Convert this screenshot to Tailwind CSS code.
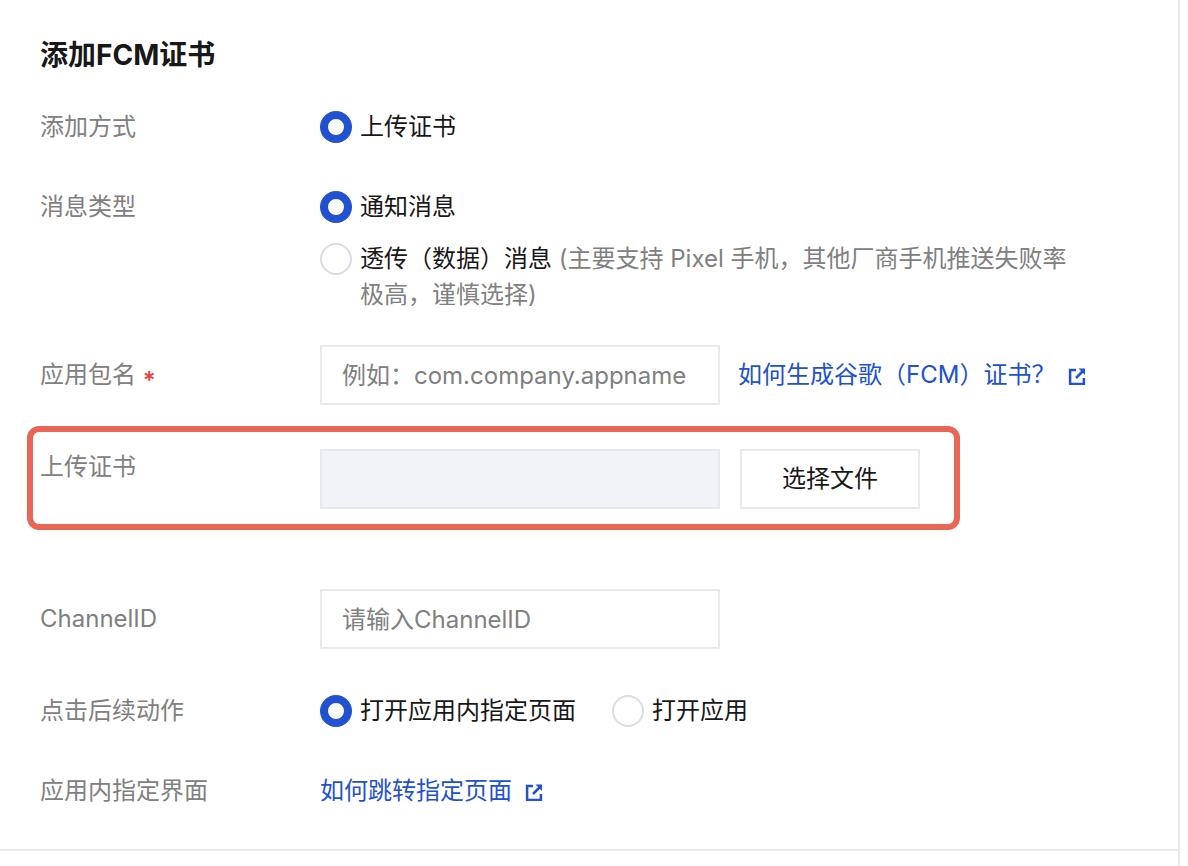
<!DOCTYPE html>
<html lang="zh-CN">
<head>
  <meta charset="UTF-8" />
  <meta name="viewport" content="width=device-width, initial-scale=1.0" />
  <title>添加FCM证书</title>
  <script src="https://cdn.jsdelivr.net/npm/@tailwindcss/browser@4"></script>
</head>
<body class="bg-white font-['Inter','Noto_Sans_CJK_SC',sans-serif] text-2xl/9 text-[#181818]">

  <main class="mr-2 min-h-screen border-r-2 border-[#e8e8ef]">
    <form class="border-b-2 border-[#e8e8ef] pt-[37px] pr-22 pb-10 pl-10">
      <h1 class="text-[28px]/9 font-bold">添加FCM证书</h1>

      <!-- 添加方式 -->
      <fieldset aria-labelledby="method-label" class="mt-9 grid grid-cols-[280px_1fr]">
        <span id="method-label" class="text-[#808080]">添加方式</span>
        <label class="flex items-center gap-2">
          <input type="radio" name="method" checked class="size-8 shrink-0 appearance-none rounded-full border-2 border-[#dadde5] checked:border-8 checked:border-[#2151d1]" />
          上传证书
        </label>
      </fieldset>

      <!-- 消息类型 -->
      <fieldset aria-labelledby="type-label" class="mt-11 grid grid-cols-[280px_1fr]">
        <span id="type-label" class="text-[#808080]">消息类型</span>
        <div class="flex flex-col gap-4">
          <label class="flex items-center gap-2">
            <input type="radio" name="type" checked class="size-8 shrink-0 appearance-none rounded-full border-2 border-[#dadde5] checked:border-8 checked:border-[#2151d1]" />
            通知消息
          </label>
          <label class="flex items-start gap-2">
            <input type="radio" name="type" class="mt-0.5 size-8 shrink-0 appearance-none rounded-full border-2 border-[#dadde5] checked:border-8 checked:border-[#2151d1]" />
            <span>透传（数据）消息 <span class="text-[#808080]">(主要支持 Pixel 手机，其他厂商手机推送失败率极高，谨慎选择)</span></span>
          </label>
        </div>
      </fieldset>

      <!-- 应用包名 -->
      <div class="mt-8 grid grid-cols-[280px_1fr] items-center">
        <label for="package" class="text-[#808080]">应用包名 <span class="align-sub leading-none font-semibold text-[#e54545]">*</span></label>
        <div class="flex items-center gap-[18px]">
          <input id="package" type="text" placeholder="例如：com.company.appname" class="h-15 w-100 border-2 border-[#e8e8ef] px-5 placeholder:text-[#808080]" />
          <a href="#" class="flex items-center gap-3 whitespace-nowrap text-[#2151d1]">
            如何生成谷歌（FCM）证书？
            <svg class="size-5 shrink-0" viewBox="0 0 20 20" fill="none" stroke="currentColor" stroke-width="2.5" aria-hidden="true">
              <path d="M9 5.1H3.1V18.9H16.9V13" />
              <path d="M9 13L16 6" />
              <path d="M11.5 3.5H18V10Z" fill="currentColor" stroke="none" />
            </svg>
          </a>
        </div>
      </div>

      <!-- 上传证书 -->
      <div class="relative mt-11 grid grid-cols-[280px_1fr]">
        <div class="pointer-events-none absolute -top-[23px] -bottom-[21px] -left-[13px] w-[933px] rounded-xl border-6 border-[#e96656]"></div>
        <label for="cert" class="text-[#808080]">上传证书</label>
        <div class="flex gap-5">
          <input id="cert" type="text" disabled class="h-15 w-100 border-2 border-[#e8e8ef] bg-[#f2f3f8] px-5" />
          <button type="button" class="h-15 w-45 border-2 border-[#e8e8ef] bg-white shadow-[0_4px_0_#fcfcfc]">选择文件</button>
        </div>
      </div>

      <!-- ChannelID -->
      <div class="mt-20 grid grid-cols-[280px_1fr] items-center">
        <label for="channel" class="text-[#808080]">ChannelID</label>
        <input id="channel" type="text" placeholder="请输入ChannelID" class="h-15 w-100 border-2 border-[#e8e8ef] px-5 placeholder:text-[#808080]" />
      </div>

      <!-- 点击后续动作 -->
      <fieldset aria-labelledby="action-label" class="mt-11 grid grid-cols-[280px_1fr]">
        <span id="action-label" class="text-[#808080]">点击后续动作</span>
        <div class="flex gap-9">
          <label class="flex items-center gap-2">
            <input type="radio" name="action" checked class="size-8 shrink-0 appearance-none rounded-full border-2 border-[#dadde5] checked:border-8 checked:border-[#2151d1]" />
            打开应用内指定页面
          </label>
          <label class="flex items-center gap-2">
            <input type="radio" name="action" class="size-8 shrink-0 appearance-none rounded-full border-2 border-[#dadde5] checked:border-8 checked:border-[#2151d1]" />
            打开应用
          </label>
        </div>
      </fieldset>

      <!-- 应用内指定界面 -->
      <div class="mt-11 grid grid-cols-[280px_1fr]">
        <span class="text-[#808080]">应用内指定界面</span>
        <a href="#" class="flex items-center gap-3 text-[#2151d1]">
          如何跳转指定页面
          <svg class="size-5 shrink-0" viewBox="0 0 20 20" fill="none" stroke="currentColor" stroke-width="2.5" aria-hidden="true">
            <path d="M9 5.1H3.1V18.9H16.9V13" />
            <path d="M9 13L16 6" />
            <path d="M11.5 3.5H18V10Z" fill="currentColor" stroke="none" />
          </svg>
        </a>
      </div>
    </form>
  </main>

</body>
</html>
